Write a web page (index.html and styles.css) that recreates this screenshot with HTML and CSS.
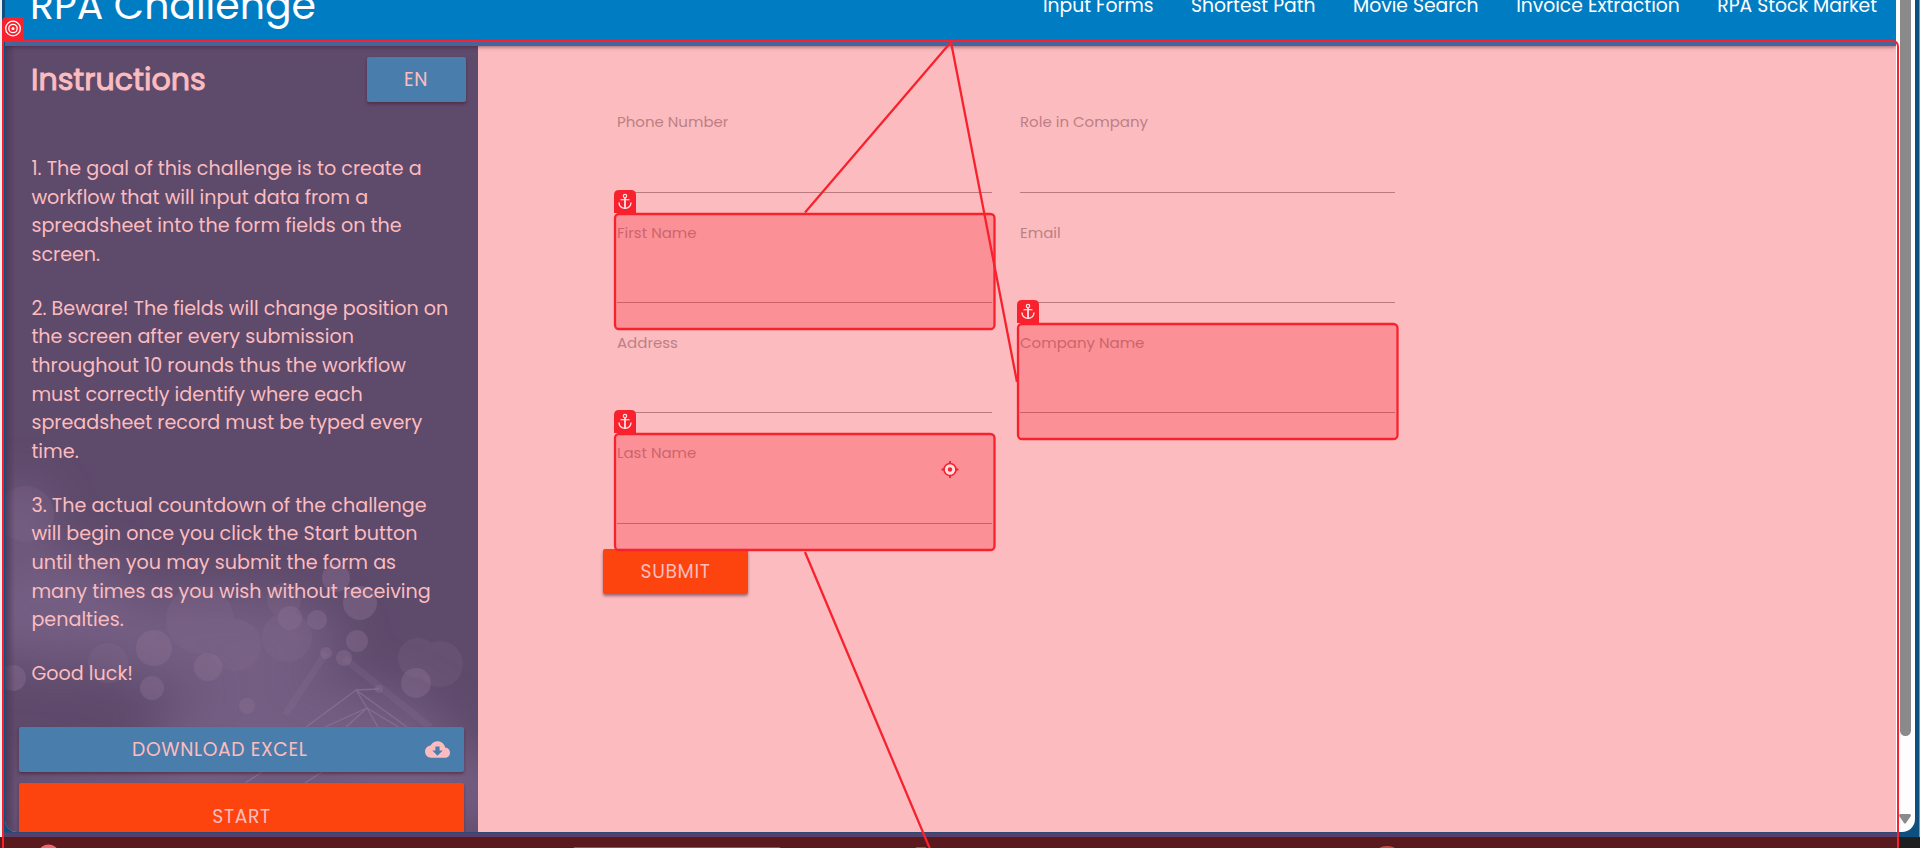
FILE: index.html
```
<!DOCTYPE html>
<html lang="en">
<head>
<meta charset="utf-8">
<title>RPA Challenge</title>
<link rel="stylesheet" href="styles.css">
</head>
<body>
<div class="desktop">
  <div class="window">
    <div class="page">
      <header class="header">
        <div class="brand">RPA Challenge</div>
        <nav class="nav"><a>Input Forms</a><a>Shortest Path</a><a>Movie Search</a><a>Invoice Extraction</a><a>RPA Stock Market</a></nav>
      </header>
      <main class="main">
        <aside class="sidebar">
          <svg class="bokeh" width="473" height="786" viewBox="5 46 473 786">
            <defs>
              <filter id="soft" x="-50%" y="-50%" width="200%" height="200%"><feGaussianBlur stdDeviation="24"/></filter>
              <linearGradient id="edge"><stop offset="0" stop-color="#4c3555" stop-opacity=".8"/><stop offset="1" stop-color="#4c3555" stop-opacity="0"/></linearGradient>
            </defs>
            <g fill="#806990" filter="url(#soft)" opacity=".65">
              <ellipse cx="50" cy="610" rx="95" ry="55"/><ellipse cx="215" cy="640" rx="130" ry="48"/><ellipse cx="300" cy="740" rx="150" ry="60"/><ellipse cx="20" cy="520" rx="30" ry="35"/><ellipse cx="430" cy="790" rx="90" ry="40"/><ellipse cx="120" cy="800" rx="120" ry="30"/>
            </g>
            <g fill="#8a7091" opacity=".42">
              <circle cx="154" cy="648" r="18"/><circle cx="13" cy="678" r="13"/><circle cx="152" cy="688" r="12"/><circle cx="208" cy="667" r="14"/><circle cx="247" cy="706" r="8"/><circle cx="290" cy="618" r="12"/><circle cx="317" cy="620" r="10"/><circle cx="336" cy="578" r="14"/><circle cx="360" cy="603" r="17"/><circle cx="357" cy="641" r="11"/><circle cx="326" cy="653" r="6"/><circle cx="344" cy="658" r="8"/><circle cx="416" cy="683" r="15"/><circle cx="379" cy="689" r="4"/>
            </g>
            <g fill="#8a7091" opacity=".2">
              <circle cx="26" cy="514" r="28"/><circle cx="108" cy="663" r="20"/><circle cx="200" cy="620" r="34"/><circle cx="287" cy="637" r="25"/><circle cx="284" cy="600" r="17"/><circle cx="418" cy="658" r="20"/><circle cx="440" cy="664" r="23"/><circle cx="235" cy="645" r="26"/>
            </g>
            <g fill="none" stroke="#927a9b" stroke-width="1.3" opacity=".6">
              <path d="M306 727 356 690 411 730M356 690 367 708 325 727M367 708 400 728M367 708 378 727M356 690 379 689M346 727 367 708M245 783 262 772M305 783 322 772"/>
              <path d="M344 658 430 727M326 653 285 715" stroke-width="7" opacity=".25"/>
            </g>
            <rect x="5" y="46" width="10" height="786" fill="url(#edge)"/>
          </svg>
          <div class="side-head"><h1>Instructions</h1><button class="btn lang">EN</button></div>
          <div class="copy">
            <p>1. The goal of this challenge is to create a workflow that will input data from a spreadsheet into the form fields on the screen.</p>
            <p>2. Beware! The fields will change position on the screen after every submission throughout 10 rounds thus the workflow must correctly identify where each spreadsheet record must be typed every time.</p>
            <p>3. The actual countdown of the challenge will begin once you click the Start button until then you may submit the form as many times as you wish without receiving penalties.</p>
            <p>Good luck!</p>
          </div>
          <button class="btn download"><span>DOWNLOAD EXCEL</span>
            <svg width="25" height="25" viewBox="0 0 24 24" fill="#fcbcbf"><path d="M19.35 10.04C18.67 6.59 15.64 4 12 4 9.11 4 6.6 5.64 5.35 8.04 2.34 8.36 0 10.91 0 14c0 3.31 2.69 6 6 6h13c2.76 0 5-2.24 5-5 0-2.64-2.05-4.78-4.65-4.96zM17 13l-5 5-5-5h3V9h4v4h3z"/></svg></button>
          <button class="btn start">START</button>
        </aside>
        <section class="content">
          <form class="form">
            <div class="field"><label>Phone Number</label></div><div class="field"><label>Role in Company</label></div>
            <div class="field"><label>First Name</label></div><div class="field"><label>Email</label></div>
            <div class="field"><label>Address</label></div><div class="field"><label>Company Name</label></div>
            <div class="field"><label>Last Name</label></div>
          </form>
          <button class="btn submit">SUBMIT</button>
        </section>
      </main>
    </div>
    <div class="scrollbar"><div class="thumb"></div><svg width="12" height="10" viewBox="0 0 12 10"><path d="M1 0h10q1.500 1 .5 2.500L7 9q-1 1.200-2 0L.5 2.500Q-.5 1 1 0z" fill="#8a8a8a"/></svg></div>
  </div>
  <footer class="taskbar"></footer>
  <svg class="overlay" width="1920" height="848" viewBox="0 0 1920 848">
    <defs>
      <g id="anchor">
        <path d="M0 23V5q0-5 5-5h12q5 0 5 5v18z" fill="#f8222e"/>
        <g fill="none" stroke="#fde3e5"><circle cx="11" cy="6" r="1.700" stroke-width="1.200"/><path d="M11 8v10.500" stroke-width="1.800"/><path d="M6.500 9.700h9" stroke-width="1.200"/><path d="M5 12.500q.3 5.700 6 5.900 5.700-.2 6-5.900" stroke-width="1.400"/></g>
      </g>
    </defs>
    <rect x="4" y="832.500" width="1894" height="5" fill="#54406a"/>
    <rect x="0" y="837" width="1899" height="11" fill="#5a191c"/>
    <path d="M574 847.500h206M916 847.500h10" stroke="#955154"/><ellipse cx="48.500" cy="851" rx="9" ry="6.500" fill="#ee666c"/><ellipse cx="1387" cy="850" rx="9" ry="4" fill="#c84b42"/>
    <g fill="none" stroke="#f8222e" stroke-width="2">
      <path d="M3 848V41h1889q6 0 6 6v801"/>
      <path d="M951 42 805 212.500M951 42l66 340M805 552l125 297" stroke-width="2.300"/>
    </g>
    <g fill="#f8222e" fill-opacity=".28" stroke="#f8222e" stroke-width="2.300">
      <rect x="615" y="214" width="379.500" height="115" rx="4"/><rect x="1018" y="324" width="379.500" height="115" rx="4"/><rect x="615" y="434" width="379.500" height="116" rx="4"/>
    </g>
    <use href="#anchor" x="614" y="190"/><use href="#anchor" x="1017" y="300"/><use href="#anchor" x="614" y="410"/>
    <path d="M2 40V22q0-5 5-5h12q5 0 5 5v18z" fill="#f8222e"/>
    <g fill="none" stroke="#fff" stroke-width="1.300"><circle cx="13" cy="28.500" r="7.300"/><circle cx="13" cy="28.500" r="4.200"/></g><circle cx="13" cy="28.500" r="1.500" fill="#fff"/>
    <g stroke="#f8222e" stroke-width="2"><path d="M950 461v17M941.500 469.500h17"/><circle cx="950" cy="469.500" r="6" fill="#fde0e2" stroke-width="1.700"/></g><circle cx="950" cy="469.500" r="2.200" fill="#f8222e"/>
  </svg>
</div>
</body>
</html>
```
FILE: styles.css
```
* { box-sizing: border-box; }
body { margin: 0; width: 1920px; height: 848px; overflow: hidden; font-family: Poppins, Inter, "Open Sans", sans-serif; color: #fcbcbf; }
label, a { white-space: nowrap; }
.desktop { position: relative; height: 848px; display: flex; flex-direction: column; background: linear-gradient(90deg, #e8eef3 2px, #0d4f7e 2px, #0d4f7e 1919px, #7c97ab 1919px); }
.window { height: 832px; margin: 0 5px; display: flex; }
.page { width: 1891px; height: 832px; overflow: hidden; background: #fcbcbf; border-bottom-left-radius: 12px; }
.header { position: relative; z-index: 1; height: 46px; display: flex; justify-content: space-between; background: linear-gradient(#007cc3 41px, #48649b 41px); box-shadow: 0 1px 4px rgba(70, 20, 40, .55); color: #fff; }
.brand { padding-left: 25px; font-size: 39.375px; line-height: 50px; margin-top: -19px; height: 50px; }
.nav { display: flex; gap: 37.5px; padding-right: 19px; font-size: 18.75px; line-height: 30px; margin-top: -9px; height: 30px; }
.main { display: flex; height: 786px; }
.sidebar { position: relative; width: 473px; height: 786px; overflow: hidden; background: #5e4a6b; }
.bokeh { position: absolute; left: 0; top: 0; }
.side-head, .copy, .btn { position: relative; }
.side-head { display: flex; justify-content: space-between; padding: 11px 12px 0 26px; }
h1 { margin: 0; font-size: 30.1px; line-height: 46px; font-weight: 400; -webkit-text-stroke: 1px #fcbcbf; }
.btn { display: flex; align-items: center; justify-content: center; border: 0; padding: 0; border-radius: 2px; height: 45px; background: #497dab; box-shadow: 0 2px 3px rgba(70, 20, 40, .5); color: #fcbcbf; font: 18.75px Poppins, Inter, sans-serif; letter-spacing: .625px; }
.lang { width: 99px; padding-right: 1px; }
.copy { width: 460px; padding: 52px 0 0 26.4px; font-size: 19.150px; line-height: 28.7px; }
.copy p { margin: 0 13px 24.800px 0; }
.download { width: 445px; margin: 38px 0 0 14px; padding: 0 14px 0 76px; justify-content: space-between; }
.download span { margin-left: 37px; }
.start { width: 445px; height: 66px; margin: 11px 0 0 14px; padding-top: 2px; background: #fd440e; }
.content { flex: 1; padding: 60px 0 0 125px; }
.form { display: grid; grid-template-columns: 375px 375px; column-gap: 28px; grid-auto-rows: 110.200px; margin-left: 14px; }
.field { height: 87px; border-bottom: 1px solid #b97a80; padding-top: 5.4px; font-size: 15px; line-height: 22px; color: #bd7f85; }
.submit { width: 145px; margin-top: 2px; background: #fd440e; }
.scrollbar { width: 19px; height: 832px; background: #fdfdfd; border-bottom-right-radius: 13px; padding-left: 4px; }
.thumb { width: 11px; height: 736px; margin-bottom: 78px; background: #8a8a8a; border-radius: 0 0 6px 6px; }
.scrollbar svg { display: block; margin-left: -1px; }
.taskbar { margin-top: 5px; height: 11px; background: #1f1f1f; }
.overlay { position: absolute; z-index: 2; left: 0; top: 0; }
```
